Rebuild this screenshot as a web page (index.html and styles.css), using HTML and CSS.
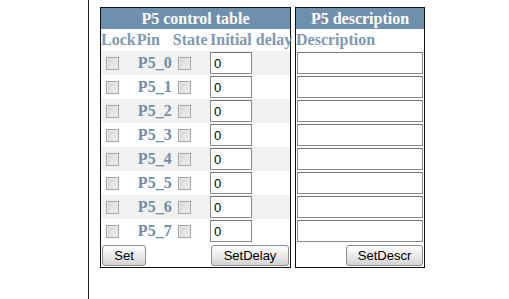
FILE: index.html
```html
<!DOCTYPE html>
<html lang="en">
<head>
    <meta charset="UTF-8">
    <title>P5 control</title>
    <link rel="stylesheet" href="styles.css">
</head>
<body>
    <div class="page">
        <div class="panels">
            <table class="ctl">
                <colgroup>
                    <col class="w-lock"><col class="w-pin"><col class="w-state"><col class="w-delay">
                </colgroup>
                <tr><th colspan="4" class="title">P5 control table</th></tr>
                <tr class="cols"><td>Lock</td><td>Pin</td><td>State</td><td class="c-delay">Initial delay</td></tr>
                <tr class="odd"><td class="cb"><input type="checkbox"></td><td class="pin">P5_0</td><td class="cb"><input type="checkbox"></td><td><input type="text" class="delay" value="0"></td></tr>
                <tr><td class="cb"><input type="checkbox"></td><td class="pin">P5_1</td><td class="cb"><input type="checkbox"></td><td><input type="text" class="delay" value="0"></td></tr>
                <tr class="odd"><td class="cb"><input type="checkbox"></td><td class="pin">P5_2</td><td class="cb"><input type="checkbox"></td><td><input type="text" class="delay" value="0"></td></tr>
                <tr><td class="cb"><input type="checkbox"></td><td class="pin">P5_3</td><td class="cb"><input type="checkbox"></td><td><input type="text" class="delay" value="0"></td></tr>
                <tr class="odd"><td class="cb"><input type="checkbox"></td><td class="pin">P5_4</td><td class="cb"><input type="checkbox"></td><td><input type="text" class="delay" value="0"></td></tr>
                <tr><td class="cb"><input type="checkbox"></td><td class="pin">P5_5</td><td class="cb"><input type="checkbox"></td><td><input type="text" class="delay" value="0"></td></tr>
                <tr class="odd"><td class="cb"><input type="checkbox"></td><td class="pin">P5_6</td><td class="cb"><input type="checkbox"></td><td><input type="text" class="delay" value="0"></td></tr>
                <tr><td class="cb"><input type="checkbox"></td><td class="pin">P5_7</td><td class="cb"><input type="checkbox"></td><td><input type="text" class="delay" value="0"></td></tr>
                <tr class="actions">
                    <td colspan="2" class="left"><button class="btn btn-set">Set</button></td>
                    <td colspan="2" class="right"><button class="btn btn-delay">SetDelay</button></td>
                </tr>
            </table>
            <table class="desc">
                <tr><th class="title">P5 description</th></tr>
                <tr class="cols"><td>Description</td></tr>
                <tr><td><input type="text" class="descr"></td></tr>
                <tr><td><input type="text" class="descr"></td></tr>
                <tr><td><input type="text" class="descr"></td></tr>
                <tr><td><input type="text" class="descr"></td></tr>
                <tr><td><input type="text" class="descr"></td></tr>
                <tr><td><input type="text" class="descr"></td></tr>
                <tr><td><input type="text" class="descr"></td></tr>
                <tr><td><input type="text" class="descr"></td></tr>
                <tr class="actions"><td class="right"><button class="btn btn-descr">SetDescr</button></td></tr>
            </table>
        </div>
    </div>
</body>
</html>
```

FILE: styles.css
```css
html, body {
    margin: 0;
    height: 100%;
    background-color: #fff;
}
body {
    font-family: "Liberation Serif", "Times New Roman", serif;
}
.page {
    margin-left: 88px;
    border-left: 1px solid #222;
    height: 100%;
    box-sizing: border-box;
    padding: 7px 0 0 11px;
}
.panels {
    display: flex;
    align-items: flex-start;
    gap: 4px;
}
table {
    border-collapse: collapse;
    border: 1px solid #111;
    table-layout: fixed;
}
td, th {
    padding: 0;
    white-space: nowrap;
}
.ctl {
    width: 191px;
}
.w-lock { width: 36px; }
.w-pin { width: 36px; }
.w-state { width: 36px; }
.w-delay { width: 81px; }
.desc {
    width: 130px;
}
.title {
    height: 21px;
    background-color: #6e8fae;
    color: #fff;
    font-size: 16px;
    font-weight: bold;
    text-align: center;
    line-height: 21px;
}
.cols td {
    color: #7d98b2;
    font-size: 16px;
    font-weight: bold;
    text-align: left;
    vertical-align: middle;
}
.c-delay {
    padding-left: 1px;
}
.ctl tr td {
    height: 24px;
}
.ctl .cols td {
    height: 22px;
}
.odd {
    background-color: #f1f1f1;
}
.cb {
    padding-left: 5px;
    vertical-align: middle;
}
.cb input {
    appearance: none;
    -webkit-appearance: none;
    display: block;
    margin: 0;
    width: 13px;
    height: 13px;
    box-sizing: border-box;
    border: 1px solid #a4a4a4;
    background: linear-gradient(135deg, #d0d0d0, #f4f4f4);
    box-shadow: inset 0 0 0 1px #e8e8e8;
}
.pin {
    color: #6f8daa;
    font-size: 16px;
    font-weight: bold;
    text-align: center;
}
.delay, .descr {
    display: block;
    box-sizing: border-box;
    height: 22px;
    margin: 0 0 0 1px;
    padding: 0 3px;
    border: 1px solid #8a8a8a;
    border-top-color: #777;
    background: #fff;
    font-family: "Liberation Sans", Arial, sans-serif;
    font-size: 13px;
    color: #000;
    outline: none;
}
.delay {
    width: 42px;
}
.descr {
    width: 126px;
}
.desc tr td {
    height: 24px;
}
.desc .cols td {
    height: 22px;
}
.actions td {
    height: 26px;
    vertical-align: middle;
}
.left {
    text-align: left;
    padding-left: 1px;
}
.right {
    text-align: right;
    padding-right: 1px;
}
.btn {
    height: 21px;
    padding: 0;
    border: 1px solid #8e8e8e;
    border-radius: 3px;
    background: linear-gradient(#fefefe, #e6e6e6 60%, #d2d2d2);
    font-family: "Liberation Sans", Arial, sans-serif;
    font-size: 13px;
    color: #000;
    vertical-align: middle;
}
.btn-set { width: 44px; }
.btn-delay { width: 78px; }
.btn-descr { width: 77px; }
```
